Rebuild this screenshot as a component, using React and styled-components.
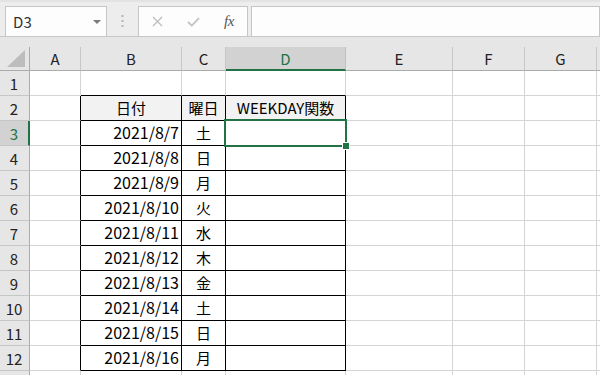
import React from "react";
import styled, { createGlobalStyle } from "styled-components";

const Global = createGlobalStyle`
  html, body { margin: 0; padding: 0; background: #ffffff; }
  body { font-family: "Noto Sans CJK JP", "Liberation Sans", sans-serif; overflow: hidden; }
`;

const GREEN = "#217346";
const GRID = "#d4d4d4";

const Page = styled.div`
  width: 600px;
  height: 375px;
  overflow: hidden;
  display: flex;
  flex-direction: column;
  background: #ffffff;
`;

const FormulaBar = styled.div`
  height: 37px;
  box-sizing: border-box;
  display: flex;
  align-items: flex-end;
  background: #ededed;
  border-top: 2px solid #e3e3e3;
  padding: 0 0 0 5px;
  border-bottom: 1px solid #c8c8c8;
  flex-shrink: 0;
`;

const Box = styled.div`
  height: 30px;
  box-sizing: border-box;
  background: #fdfdfd;
  border: 1px solid #c6c6c6;
  border-bottom: none;
  display: flex;
  align-items: center;
  width: ${(p) => p.$w}px;
  flex: ${(p) => (p.$grow ? 1 : "none")};
  margin-right: ${(p) => p.$mr || 0}px;
`;

const NameText = styled.span`
  font-size: 15px;
  color: #333;
  padding-left: 7px;
  flex: 1;
  letter-spacing: 0.2px;
`;

const Caret = styled.span`
  width: 0;
  height: 0;
  border-left: 4px solid transparent;
  border-right: 4px solid transparent;
  border-top: 4px solid #7a7a7a;
  margin-right: 5px;
`;

const Dots = styled.div`
  width: 31px;
  height: 30px;
  display: flex;
  justify-content: center;
  align-items: center;
`;

const IconSlot = styled.span`
  width: ${(p) => p.$w}px;
  display: flex;
  justify-content: center;
  align-items: center;
`;

const Fx = styled.span`
  font-family: "Liberation Serif", serif;
  font-style: italic;
  font-size: 15px;
  color: #555;
  letter-spacing: -0.5px;
`;

const Band = styled.div`
  height: 10px;
  background: #e6e6e6;
  flex-shrink: 0;
`;

const Sheet = styled.div`
  display: grid;
  grid-template-columns: 30px 51px 101px 44px 120px 107px 72px 72px 4px;
  grid-template-rows: 24px repeat(13, 25px);
  flex: 1;
`;

const Cell = styled.div`
  position: relative;
  box-sizing: border-box;
  border-right: 1px solid ${(p) => p.$rb || GRID};
  border-bottom: 1px solid ${(p) => p.$bb || GRID};
  background: ${(p) => p.$bg || "#ffffff"};
  font-size: ${(p) => (p.$num ? 16 : 15)}px;
  color: #000;
  line-height: 23px;
  white-space: nowrap;
  text-align: ${(p) => p.$align || "left"};
  padding: 0 ${(p) => (p.$align === "right" ? 2 : 1)}px 0 1px;
  overflow: visible;
`;

const ColHead = styled.div`
  box-sizing: border-box;
  background: ${(p) => (p.$sel ? "#d2d2d2" : "#e6e6e6")};
  border-right: 1px solid ${(p) => (p.$sel ? "#c0c0c0" : "#c6c6c6")};
  border-bottom: ${(p) => (p.$sel ? `2px solid ${GREEN}` : "1px solid #ababab")};
  color: ${(p) => (p.$sel ? GREEN : "#222")};
  font-size: 15px;
  display: flex;
  justify-content: center;
  align-items: center;
  padding-top: ${(p) => (p.$sel ? 1 : 0)}px;
`;

const Corner = styled.div`
  box-sizing: border-box;
  background: #e6e6e6;
  border-right: 1px solid #ababab;
  border-bottom: 1px solid #ababab;
  display: flex;
  align-items: flex-end;
  justify-content: flex-end;
  padding: 0 4px 3px 0;
`;

const RowHead = styled.div`
  box-sizing: border-box;
  background: ${(p) => (p.$sel ? "#d2d2d2" : "#e6e6e6")};
  border-right: ${(p) => (p.$sel ? `2px solid ${GREEN}` : "1px solid #ababab")};
  border-bottom: 1px solid #c6c6c6;
  color: ${(p) => (p.$sel ? GREEN : "#222")};
  font-size: 15px;
  display: flex;
  justify-content: center;
  align-items: center;
  padding-right: ${(p) => (p.$sel ? 0 : 1)}px;
`;

const Selection = styled.div`
  position: absolute;
  left: -2px;
  top: -2px;
  right: -2px;
  bottom: -2px;
  border: 2px solid ${GREEN};
  pointer-events: none;
  z-index: 2;
`;

const Handle = styled.div`
  position: absolute;
  right: -5px;
  bottom: -5px;
  width: 6px;
  height: 6px;
  background: ${GREEN};
  border: 1px solid #ffffff;
  z-index: 3;
`;

const cols = ["A", "B", "C", "D", "E", "F", "G", ""];

const data = [
  ["2021/8/7", "土"],
  ["2021/8/8", "日"],
  ["2021/8/9", "月"],
  ["2021/8/10", "火"],
  ["2021/8/11", "水"],
  ["2021/8/12", "木"],
  ["2021/8/13", "金"],
  ["2021/8/14", "土"],
  ["2021/8/15", "日"],
  ["2021/8/16", "月"],
];

function cellContent(r, c) {
  if (r === 2) {
    if (c === 1) return { text: "日付", align: "center", bg: "#f2f2f2" };
    if (c === 2) return { text: "曜日", align: "center", bg: "#f2f2f2" };
    if (c === 3) return { text: "WEEKDAY関数", align: "center", bg: "#f2f2f2" };
  }
  if (r >= 3 && r <= 12) {
    const d = data[r - 3];
    if (c === 1) return { text: d[0], align: "right", num: true };
    if (c === 2) return { text: d[1], align: "center" };
  }
  return { text: "" };
}

export default function App() {
  const rows = [];
  for (let r = 1; r <= 13; r++) {
    rows.push(
      <RowHead key={`rh${r}`} $sel={r === 3}>
        {r <= 12 ? r : ""}
      </RowHead>
    );
    cols.forEach((_, c) => {
      const inTableRow = r >= 2 && r <= 12;
      const rb = inTableRow && c <= 3 ? "#000" : undefined;
      const bb = r >= 1 && r <= 12 && c >= 1 && c <= 3 ? "#000" : undefined;
      const info = cellContent(r, c);
      rows.push(
        <Cell
          key={`c${r}-${c}`}
          $rb={rb}
          $bb={bb}
          $bg={info.bg}
          $align={info.align}
          $num={info.num}
        >
          {info.text}
          {r === 3 && c === 3 && (
            <Selection>
              <Handle />
            </Selection>
          )}
        </Cell>
      );
    });
  }

  return (
    <Page>
      <Global />
      <FormulaBar>
        <Box $w={102}>
          <NameText>D3</NameText>
          <Caret />
        </Box>
        <Dots>
          <svg width="3" height="12" viewBox="0 0 3 12">
            <rect x="0.5" y="0" width="2" height="2" fill="#b5b5b5" />
            <rect x="0.5" y="5" width="2" height="2" fill="#b5b5b5" />
            <rect x="0.5" y="10" width="2" height="2" fill="#b5b5b5" />
          </svg>
        </Dots>
        <Box $w={110} $mr={3}>
          <IconSlot $w={36}>
            <svg width="11" height="11" viewBox="0 0 11 11">
              <path d="M1 1 L10 10 M10 1 L1 10" stroke="#bdbdbd" strokeWidth="1.3" fill="none" />
            </svg>
          </IconSlot>
          <IconSlot $w={36}>
            <svg width="13" height="10" viewBox="0 0 13 10">
              <path d="M1 5 L4.8 8.6 L12 1.2" stroke="#c2c2c2" strokeWidth="1.8" fill="none" />
            </svg>
          </IconSlot>
          <IconSlot $w={36}>
            <Fx>fx</Fx>
          </IconSlot>
        </Box>
        <Box $grow />
      </FormulaBar>
      <Band />
      <Sheet>
        <Corner>
          <svg width="18" height="17" viewBox="0 0 18 17">
            <polygon points="18,0 18,17 0,17" fill="#bdbdbd" />
          </svg>
        </Corner>
        {cols.map((l, i) => (
          <ColHead key={`h${i}`} $sel={l === "D"}>
            {l}
          </ColHead>
        ))}
        {rows}
      </Sheet>
    </Page>
  );
}
